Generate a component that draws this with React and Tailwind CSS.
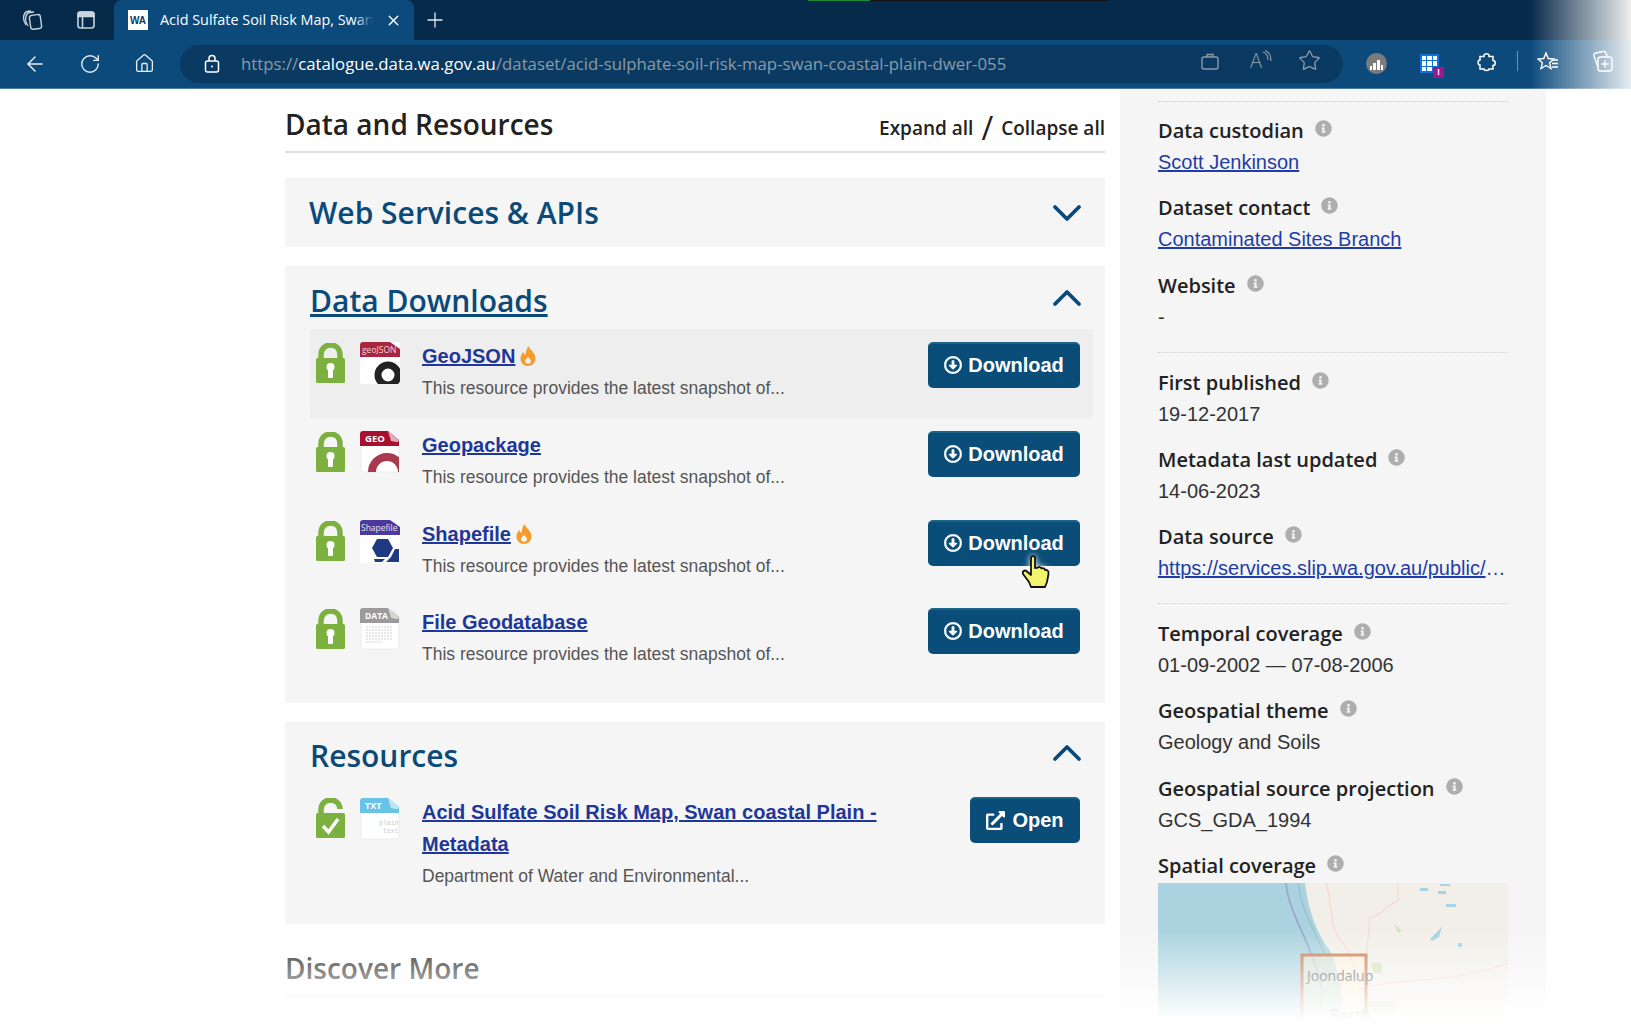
import { ArrowLeft, RotateCw, Home, Star, Plus, X } from 'lucide-react';
import { FaInfoCircle, FaRegArrowAltCircleDown, FaExternalLinkAlt } from 'react-icons/fa';

const sans = "font-['Liberation_Sans',Arial,sans-serif]";
const open = "font-['Open_Sans',sans-serif]";

function Chevron({ up }) {
  return (
    <svg width="30" height="18" viewBox="0 0 30 18" fill="none" stroke="#0b4a78" strokeWidth="3.800" strokeLinecap="round" strokeLinejoin="round">
      <polyline points={up ? '3,15 15,3 27,15' : '3,3 15,15 27,3'} />
    </svg>
  );
}

function Padlock({ open: unlocked }) {
  if (unlocked) {
    return (
      <svg width="29" height="40" viewBox="0 0 29 40" className="shrink-0">
        <path d="M5 19V12C5 6 9 2 14.500 2S24 6 24 11" fill="none" stroke="#7cb13f" strokeWidth="5.500" />
        <rect x="0" y="15" width="29" height="25" rx="1.500" fill="#7cb13f" />
        <polyline points="7,28 12.500,34 22,21" fill="none" stroke="#fff" strokeWidth="3.500" />
      </svg>
    );
  }
  return (
    <svg width="29" height="40" viewBox="0 0 29 40" className="shrink-0">
      <path d="M5 18V12C5 6 9 2 14.500 2S24 6 24 12V18" fill="none" stroke="#7cb13f" strokeWidth="5.500" />
      <rect x="0" y="15" width="29" height="25" rx="1.500" fill="#7cb13f" />
      <circle cx="14.500" cy="24" r="4" fill="#fff" />
      <rect x="12" y="24" width="5" height="11" rx="1" fill="#fff" />
    </svg>
  );
}

function FileIcon({ label, color, fold, children, labelSize = 9.500 }) {
  return (
    <svg width="40" height="42" viewBox="0 0 40 42" className="shrink-0">
      <path d="M1 3Q1 1 3 1H28L39 9V39Q39 41 37 41H3Q1 41 1 39Z" fill="#fff" stroke="#ececec" />
      <path d="M0 3Q0 0 3 0H28L39 9V15H0Z" fill={color} />
      <path d="M28 0L39 9Q39 11 36 11L31 10Z" fill={fold} />
      <text x="5" y="11" fontSize={labelSize} fontWeight="700" fill="#fff" fontFamily="Open Sans, sans-serif">{label}</text>
      {children}
    </svg>
  );
}

function FormatIcon({ type }) {
  if (type === 'geojson') {
    return (
      <svg width="40" height="42" viewBox="0 0 40 42" className="shrink-0">
        <rect x="0" y="0" width="40" height="42" rx="2" fill="#fff" />
        <path d="M0 3Q0 0 3 0H30L40 7V15H0Z" fill="#a6273f" />
        <text x="2" y="11" fontSize="8.500" fill="#f3d5da" fontFamily="Open Sans, sans-serif">geoJSON</text>
        <clipPath id="jsonClip"><rect x="0" y="16" width="40" height="26" /></clipPath>
        <ellipse cx="28" cy="33" rx="10" ry="10" fill="none" stroke="#222" strokeWidth="7" clipPath="url(#jsonClip)" />
      </svg>
    );
  }
  if (type === 'geo') {
    return (
      <FileIcon label="GEO" color="#a8102f" fold="#e2aab6">
        <clipPath id="geoClip"><rect x="0" y="15" width="39" height="26" /></clipPath>
        <circle cx="27" cy="41" r="15" fill="none" stroke="#a93a4e" strokeWidth="8" clipPath="url(#geoClip)" />
      </FileIcon>
    );
  }
  if (type === 'shape') {
    return (
      <svg width="40" height="43" viewBox="0 0 40 43" className="shrink-0">
        <rect x="0" y="0" width="40" height="43" rx="2" fill="#fff" />
        <path d="M0 3Q0 0 3 0H30L40 7V15H0Z" fill="#4b3a9c" />
        <text x="1" y="11" fontSize="8.500" fill="#e4e0f5" fontFamily="Open Sans, sans-serif">Shapefile</text>
        <polygon points="17,19 28,19 33,28 28,37 17,37 12,28" fill="#1f3a80" />
        <polygon points="31,37 35,29 39,29 39,42 26,42" fill="#1f3a80" />
        <polygon points="14,39 25,39 22,42 15,42" fill="#1f3a80" />
      </svg>
    );
  }
  if (type === 'data') {
    return (
      <FileIcon label="DATA" color="#9a9a9a" fold="#d4d4d4" labelSize={8.500}>
        {[19, 22, 25, 28, 31, 34].map(y => (
          <line key={y} x1="6" x2={y === 34 ? 22 : 33} y1={y} y2={y} stroke="#bdbdbd" strokeWidth="0.700" strokeDasharray="2 1" />
        ))}
      </FileIcon>
    );
  }
  return (
    <FileIcon label="TXT" color="#67c4e6" fold="#bfe6f4" labelSize={9}>
      <text x="19" y="27" fontSize="6.500" fill="#ccc" fontFamily="Liberation Mono, monospace">plain</text>
      <text x="23" y="35" fontSize="6.500" fill="#ccc" fontFamily="Liberation Mono, monospace">text</text>
    </FileIcon>
  );
}

function Flame() {
  return (
    <svg width="16" height="20" viewBox="0 0 16 20" className="ml-[5px] shrink-0">
      <path fillRule="evenodd" d="M8.500 0C9 3 15.500 6.500 15.500 12.500C15.500 16.800 12.200 20 8 20S0.500 16.800 0.500 12.500C0.500 9.500 2 7.500 3.500 6C3.800 7.500 4.500 8.500 5.500 9C5.800 6 6.500 3 8.500 0ZM8 11C6.500 12.500 5 13.800 5 15.300C5 16.900 6.300 17.800 8 17.800S11 16.900 11 15.300C11 13.800 9.500 12.500 8 11Z" fill="#f59a2c" />
    </svg>
  );
}

function DownloadBtn() {
  return (
    <button className={`flex items-center justify-center gap-[6px] w-[152px] h-[46px] pb-[2px] rounded-[5px] bg-[#094d78] border-t-2 border-[#1a6487] text-white text-[20px] font-bold ${sans}`}>
      <FaRegArrowAltCircleDown size={18} stroke="currentColor" strokeWidth={16} />
      Download
    </button>
  );
}

function ResourceRow({ title, format, flame, active }) {
  return (
    <div className={`flex h-[88.800px] pl-[6px] pr-[13px] rounded-[3px] ${active ? 'bg-[#eeeeee]' : ''}`}>
      <div className="pt-[14px]"><Padlock /></div>
      <div className="pt-[13px] ml-[15px]"><FormatIcon type={format} /></div>
      <div className="ml-[22px] flex-1 pt-[11px]">
        <div className="flex items-center h-[32px]">
          <a className={`text-[20px] font-bold text-[#1e3799] underline ${sans}`}>{title}</a>
          {flame && <Flame />}
        </div>
        <p className={`text-[17.500px] leading-[32px] text-[#555] ${sans}`}>This resource provides the latest snapshot of...</p>
      </div>
      <div className="pt-[13px]"><DownloadBtn /></div>
    </div>
  );
}

function Label({ children }) {
  return (
    <div className={`flex items-center h-[32px] text-[20px] font-semibold text-[#222] ${open}`}>
      {children}
      <FaInfoCircle size={17} className="ml-[11px] -mt-[5px] text-[#aeaeae]" />
    </div>
  );
}

function Meta({ label, children, link }) {
  return (
    <div className="mb-[14.300px]">
      <Label>{label}</Label>
      <div className={`-mt-[1px] h-[32px] text-[20px] leading-[32px] whitespace-nowrap overflow-hidden text-ellipsis ${link ? 'text-[#1e3da8] underline' : 'text-[#333]'} ${sans}`}>
        {children}
      </div>
    </div>
  );
}

function MapThumb() {
  return (
    <svg width="350" height="150" viewBox="0 0 350 150" className="block mt-[1px]">
      <rect width="350" height="150" fill="#f2efe9" />
      <path d="M0 0H147C150 25 158 50 172 68C180 85 186 110 184 150H0Z" fill="#aad3df" />
      <path d="M128 0C130 25 146 50 152 68C158 85 168 100 162 130" fill="none" stroke="#9aa6cc" strokeWidth="1.800" />
      <path d="M140 0C144 30 158 50 166 70" fill="none" stroke="#9dbccd" strokeWidth="1.200" />
      <path d="M168 0C175 20 170 45 185 60C195 75 200 95 205 130" fill="none" stroke="#f8d8cf" strokeWidth="1.300" />
      <path d="M240 0V18C232 20 225 30 212 35C210 55 208 80 205 100" fill="none" stroke="#f8d8cf" strokeWidth="1.300" />
      <path d="M205 105C240 95 300 100 350 80" fill="none" stroke="#f8d8cf" strokeWidth="1.300" />
      <path d="M272 56L282 46L284 44L281 54L274 58Z" fill="#a6d3e6" />
      <path d="M262 5H270V8H262ZM282 1H292V3H282ZM280 8H288V11H280ZM288 21H298V24H288ZM300 60H304V64H300Z" fill="#a6d3e6" />
      <path d="M237 42L244 48L240 50Z" fill="#cfe2bc" />
      <path d="M213 80H224V90H216Z" fill="#cfe2bc" />
      <rect x="210" y="118" width="28" height="24" fill="#cfe2bc" />
      <path d="M144 72H208V150H144Z" fill="#fbf1cf" fillOpacity="0.5" stroke="#c77a4e" strokeWidth="3" />
      <text x="149" y="98" fontSize="14" fill="#555" fontFamily="Open Sans, sans-serif">Joondalup</text>
      <text x="172" y="138" fontSize="16" fill="#555" fontFamily="Open Sans, sans-serif">Perth</text>
    </svg>
  );
}

function Browser() {
  return (
    <div className="shrink-0">
      <div className="flex h-[40px] bg-[#062a4a] relative">
        <div className="absolute left-[808px] top-0 w-[62px] h-[1px] bg-[#1c8a3c]" />
        <div className="absolute left-[870px] top-0 w-[238px] h-[1px] bg-[#141414]" />
        <div className="w-[114px] flex items-center pl-[22px] gap-[32px] text-[#c8d4de]">
          <svg width="22" height="22" viewBox="0 0 22 22" fill="none" stroke="currentColor" strokeWidth="1.400">
            <rect x="8" y="6" width="11" height="14" rx="2.500" transform="rotate(-8 13 13)" />
            <path d="M6 17C3.500 13 3 8 5 5C6 3.500 9 3 12 3" />
            <path d="M4 16C1.500 12 1 7 3 4C4 2.500 7 2 9 2" />
          </svg>
          <svg width="20" height="20" viewBox="0 0 20 20" fill="none" stroke="currentColor" strokeWidth="1.600">
            <rect x="2" y="2" width="16" height="16" rx="2.500" />
            <path d="M2 4.500Q2 2 4.500 2H15.500Q18 2 18 4.500V6.500H2Z" fill="currentColor" />
            <line x1="6.500" y1="6" x2="6.500" y2="18" />
          </svg>
        </div>
        <div className={`flex items-center w-[300px] bg-[#0c4a7c] rounded-t-[8px] pl-[14px] text-white text-[14.400px] ${open}`}>
          <div className="w-[20px] h-[20px] bg-white flex items-center justify-center shrink-0">
            <span className={`text-[10px] font-black text-[#0b3a68] ${sans}`}>WA</span>
          </div>
          <div className="relative ml-[12px] w-[213px] shrink-0 whitespace-nowrap overflow-hidden">
            Acid Sulfate Soil Risk Map, Swan
            <div className="absolute right-0 top-0 bottom-0 w-[18px] bg-gradient-to-r from-transparent to-[#0c4a7c]" />
          </div>
          <X size={17} className="ml-[12px] shrink-0" />
        </div>
        <Plus size={24} strokeWidth={1.300} className="ml-[9px] mt-[8px] text-[#e4e9ee]" />
      </div>
      <div className="flex items-center h-[49px] pb-[1px] bg-[#0c4a7c] border-b border-[#4d7ba0] text-[#e8eef3]">
        <ArrowLeft size={24} strokeWidth={1.500} className="ml-[23px]" />
        <RotateCw size={22} strokeWidth={1.500} className="ml-[32px]" />
        <Home size={21} strokeWidth={1.500} className="ml-[33px]" />
        <div className="ml-[25px] flex items-center w-[1163px] h-[38px] rounded-full bg-[#0a3a61] pl-[24px]">
          <svg width="16" height="20" viewBox="0 0 16 20" fill="none" stroke="#fff" strokeWidth="1.500" className="shrink-0">
            <rect x="1.500" y="7" width="13" height="11" rx="2" />
            <path d="M5 7V4.500C5 2.500 6.300 1.500 8 1.500S11 2.500 11 4.500V7" />
            <circle cx="8" cy="12.500" r="1" fill="#fff" stroke="none" />
          </svg>
          <div className={`ml-[21px] text-[16.770px] whitespace-nowrap text-[#8b9aa8] ${open}`}>
            https://<span className="text-white">catalogue.data.wa.gov.au</span>/dataset/acid-sulphate-soil-risk-map-swan-coastal-plain-dwer-055
          </div>
        </div>
        <div className="ml-[23px] w-[21px] h-[21px] rounded-full bg-[#7b7b7b] flex items-end justify-center pb-[4px] gap-[1px]">
          <span className="w-[2px] h-[4px] bg-white" /><span className="w-[3px] h-[7px] bg-white" /><span className="w-[3px] h-[10px] bg-white" /><span className="w-[2px] h-[5px] bg-white" />
        </div>
        <div className="ml-[33px] w-[19px] h-[19px] relative grid grid-cols-3 gap-[1px] p-[2px] bg-[#1173d4]">
          {[0, 1, 2, 3, 4, 5, 6, 7, 8].map(i => <span key={i} className="bg-white" />)}
          <span className={`absolute -right-[5px] -bottom-[5px] w-[11px] h-[11px] bg-[#a01590] text-white text-[9px] leading-[11px] text-center font-bold ${sans}`}>!</span>
        </div>
      </div>
      <div className="absolute top-[49px] left-[1200px] flex items-center text-[#8c9aa7]">
        <svg width="20" height="20" viewBox="0 0 20 20" fill="none" stroke="currentColor" strokeWidth="1.400">
          <rect x="2" y="6" width="16" height="12" rx="2" /><path d="M7 6V3.500H13V6" />
        </svg>
        <span className={`ml-[30px] text-[20px] font-light leading-[20px] ${open}`}>A</span>
        <svg width="10" height="14" viewBox="0 0 10 14" fill="none" stroke="currentColor" strokeWidth="1.200" className="-mt-[8px]">
          <path d="M1 2C4 3 6 6 6 10M3 0.500C7 2 9 6 9 11" />
        </svg>
        <Star size={23} strokeWidth={1.400} className="ml-[26px]" />
      </div>
      <div className="absolute top-[50px] left-[1477px] flex items-center text-white">
        <svg width="20" height="21" viewBox="0 0 20 21" fill="none" stroke="currentColor" strokeWidth="1.500">
          <path d="M7 4.500C7 2 12 2 12 4.500V5.500H16V9.500C19 9.500 19 14.500 16 14.500V18H12C12 20 7 20 7 18H3V14C0.500 14 0.500 9 3 9V5.500H7Z" />
        </svg>
        <span className="ml-[20px] w-[1px] h-[20px] bg-[#6f93ae]" />
        <svg width="22" height="20" viewBox="0 0 22 20" fill="none" stroke="currentColor" strokeWidth="1.400" className="ml-[19px]">
          <path d="M9 2L11.300 7.500L17 8L12.600 11.800L14 17.500L9 14.500L4 17.500L5.400 11.800L1 8L6.700 7.500Z" />
          <path d="M15 9H21M15 12.500H21M15 16H21" />
        </svg>
        <svg width="22" height="22" viewBox="0 0 22 22" fill="none" stroke="currentColor" strokeWidth="1.400" className="ml-[33px]">
          <path d="M6 17L2 6Q1.500 3.500 4 3L11 1.500Q13.500 1 14 3L15 6" />
          <rect x="6" y="7" width="14" height="14" rx="2.500" />
          <path d="M13 10.500V17.500M9.500 14H16.500" />
        </svg>
      </div>
      <div className="absolute top-[40px] left-[1530px] w-[101px] h-[49px] bg-gradient-to-r from-transparent to-white/90" />
      <div className="absolute top-0 left-[1530px] w-[101px] h-[40px] bg-gradient-to-r from-transparent to-[#eeeeee]" />
    </div>
  );
}

export default function App() {
  return (
    <div className="relative h-[1029px] overflow-hidden bg-white flex flex-col">
      <Browser />
      <div className="flex flex-1 min-h-0 pl-[285px]">
        <main className="w-[820px]">
          <div className="flex items-end justify-between h-[64px] pb-[4px] border-b-2 border-[#ddd]">
            <h2 className={`text-[28px] leading-[40px] font-semibold text-[#222] mb-[3px] ${open}`}>Data and Resources</h2>
            <div className={`flex items-center text-[19px] font-semibold text-[#222] mb-[3px] ${open}`}>
              Expand all
              <span className="mx-[8px] text-[32px] font-normal leading-[32px]">/</span>
              Collapse all
            </div>
          </div>

          <section className="mt-[25px] h-[69px] bg-[#f5f5f5] flex items-center justify-between pl-[24px] pr-[23px]">
            <h3 className={`text-[30px] font-semibold text-[#0b4a78] ${open}`}>Web Services &amp; APIs</h3>
            <Chevron />
          </section>

          <section className="mt-[19px] h-[437px] bg-[#f5f5f5] pl-[25px] pr-[12px]">
            <div className="flex items-center justify-between h-[63px] pr-[11px]">
              <h3 className={`text-[30px] font-semibold text-[#0b4a78] underline mt-[5px] ${open}`}>Data Downloads</h3>
              <Chevron up />
            </div>
            <ResourceRow title="GeoJSON" format="geojson" flame active />
            <ResourceRow title="Geopackage" format="geo" />
            <ResourceRow title="Shapefile" format="shape" flame />
            <ResourceRow title="File Geodatabase" format="data" />
          </section>

          <section className="mt-[19px] h-[202px] bg-[#f5f5f5] pl-[25px] pr-[12px]">
            <div className="flex items-center justify-between h-[66px] pr-[11px]">
              <h3 className={`text-[30px] font-semibold text-[#0b4a78] ${open}`}>Resources</h3>
              <div className="mb-[4px]"><Chevron up /></div>
            </div>
            <div className="flex pl-[6px] pr-[13px]">
              <div className="pt-[10px]"><Padlock open /></div>
              <div className="pt-[10px] ml-[15px]"><FormatIcon type="txt" /></div>
              <div className="ml-[22px] w-[480px] pt-[8px]">
                <a className={`text-[20px] leading-[32px] font-bold text-[#1e3799] underline ${sans}`}>Acid Sulfate Soil Risk Map, Swan coastal Plain - Metadata</a>
                <p className={`text-[17.500px] leading-[32px] text-[#555] ${sans}`}>Department of Water and Environmental...</p>
              </div>
              <button className={`ml-auto mt-[9px] flex items-center justify-center gap-[7px] pb-[2px] w-[110px] h-[46px] rounded-[5px] bg-[#094d78] border-t-2 border-[#1a6487] text-white text-[20px] font-bold ${sans}`}>
                <FaExternalLinkAlt size={19} />
                Open
              </button>
            </div>
          </section>

          <div className="mt-[22px] h-[51px] border-b border-[#ddd]">
            <h2 className={`text-[28px] leading-[44px] font-semibold text-[#222] ${open}`}>Discover More</h2>
          </div>
        </main>

        <aside className="ml-[15px] w-[426px] bg-[#f5f5f5] px-[38px] pt-[12px]">
          <div className="border-t border-dotted border-[#ccc] pt-[13px]">
            <Meta label="Data custodian" link>Scott Jenkinson</Meta>
            <Meta label="Dataset contact" link>Contaminated Sites Branch</Meta>
            <Meta label="Website">-</Meta>
          </div>
          <div className="border-t border-dotted border-[#ccc] mt-[19px] pt-[14px]">
            <Meta label="First published">19-12-2017</Meta>
            <Meta label="Metadata last updated">14-06-2023</Meta>
            <Meta label="Data source" link>https://services.slip.wa.gov.au/public/rest/services</Meta>
          </div>
          <div className="border-t border-dotted border-[#ccc] mt-[19px] pt-[14px]">
            <Meta label="Temporal coverage">01-09-2002 — 07-08-2006</Meta>
            <Meta label="Geospatial theme">Geology and Soils</Meta>
            <Meta label="Geospatial source projection">GCS_GDA_1994</Meta>
            <Label>Spatial coverage</Label>
            <MapThumb />
          </div>
        </aside>
      </div>

      {/* mouse pointer sitting on the third download button */}
      <svg width="30" height="34" viewBox="0 0 30 34" className="absolute left-[1021px] top-[555px] drop-shadow-[0_0_3px_white]">
        <path d="M10 3C10 0.500 14 0.500 14 3V13L17 12.500C18 11.500 20 12 20.500 13.500C22 12.500 24 13.500 24 15C26 14.500 28 16 27.500 19L26 27L24 32H10L8 27L2 19C1 16 4 14.500 6 16.500L10 20Z" fill="#f2f56b" stroke="#111" strokeWidth="1.800" strokeLinejoin="round" />
      </svg>

      {/* page fades out at the bottom */}
      <div className="absolute left-0 right-0 top-[930px] h-[90px] bg-gradient-to-b from-transparent to-white" />
      <div className="absolute left-0 right-0 top-[1020px] h-[9px] bg-white" />
    </div>
  );
}
